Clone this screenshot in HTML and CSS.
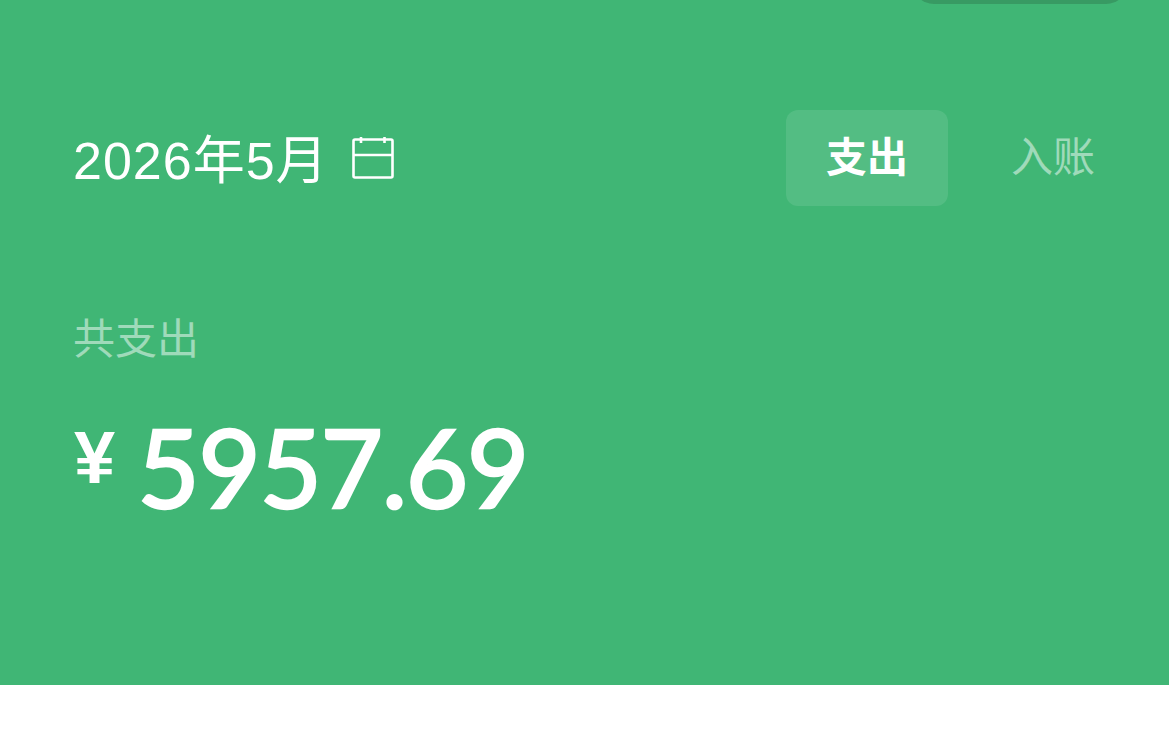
FILE: index.html
```html
<!DOCTYPE html>
<html lang="zh-CN">
<head>
    <meta charset="UTF-8">
    <meta name="viewport" content="width=device-width, initial-scale=1.0">
    <title>账单</title>
    <link rel="stylesheet" href="styles.css">
</head>
<body>
    <div class="summary">
        <div class="top-pill"></div>
        <div class="toolbar">
            <div class="month">
                <span class="month-text">2026年5月</span>
                <svg class="calendar-icon" width="46" height="46" viewBox="0 0 46 46" fill="none" stroke="#fff" stroke-width="2.6">
                    <rect x="3.5" y="4.5" width="39" height="38" rx="1.5"/>
                    <path d="M3.5 20H42.5"/>
                    <path d="M11 2V8"/>
                    <path d="M34.5 2V8"/>
                </svg>
            </div>
            <div class="tabs">
                <div class="tab active">支出</div>
                <div class="tab">入账</div>
            </div>
        </div>
        <div class="total-label">共支出</div>
        <div class="total">
            <span class="currency">¥</span>
            <span class="amount">5957.69</span>
        </div>
    </div>
</body>
</html>
```

FILE: styles.css
```css
body {
    margin: 0;
    height: 751px;
    overflow: hidden;
    background-color: #fff;
    font-family: "Liberation Sans", "Noto Sans CJK SC", sans-serif;
}
.summary {
    height: 685px;
    box-sizing: border-box;
    padding: 110px 74px 0;
    background-color: #40b675;
    color: #fff;
    position: relative;
}
.top-pill {
    position: absolute;
    top: -40px;
    right: 41px;
    width: 216px;
    height: 44px;
    border-radius: 22px;
    background-color: #389a63;
}
.toolbar {
    display: flex;
    justify-content: space-between;
    align-items: center;
    height: 96px;
}
.month {
    display: flex;
    align-items: center;
    gap: 21px;
}
.month-text {
    font-size: 52px;
    line-height: 56px;
    letter-spacing: 1px;
    margin-top: 5px;
    margin-left: -1px;
}
.tabs {
    display: flex;
    align-items: center;
}
.tab {
    font-size: 42px;
    line-height: 90px;
    color: rgba(255, 255, 255, 0.5);
    margin-left: 63px;
}
.tab.active {
    width: 162px;
    height: 96px;
    margin-left: 0;
    display: flex;
    justify-content: center;
    align-items: center;
    border-radius: 12px;
    background-color: rgba(255, 255, 255, 0.1);
    color: #fff;
    font-size: 41px;
    font-weight: 700;
}
.total-label {
    margin-top: 109px;
    margin-left: -1px;
    font-size: 42px;
    line-height: 50px;
    color: rgba(255, 255, 255, 0.5);
}
.total {
    display: flex;
    align-items: flex-start;
    gap: 22px;
    margin-top: 34px;
}
.currency {
    font-size: 74px;
    font-weight: 700;
    line-height: 80px;
    margin-top: 19px;
}
.amount {
    font-family: "Lato", sans-serif;
    font-size: 108px;
    font-weight: 400;
    line-height: 134px;
    letter-spacing: -1.5px;
    -webkit-text-stroke: 2.5px #fff;
}
```
